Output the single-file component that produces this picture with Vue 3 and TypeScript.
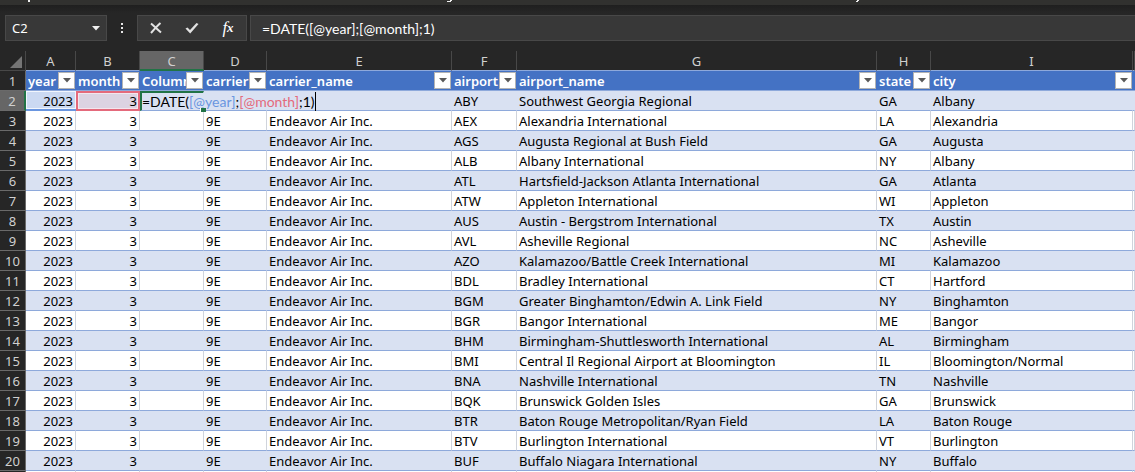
<script setup lang="ts">
import { ref } from 'vue'

interface Column {
  letter: string
  label: string
  cls: string
}

const columns: Column[] = [
  { letter: 'A', label: 'year', cls: 'w-a' },
  { letter: 'B', label: 'month', cls: 'w-b' },
  { letter: 'C', label: 'Column1', cls: 'w-c' },
  { letter: 'D', label: 'carrier', cls: 'w-d' },
  { letter: 'E', label: 'carrier_name', cls: 'w-e' },
  { letter: 'F', label: 'airport', cls: 'w-f' },
  { letter: 'G', label: 'airport_name', cls: 'w-g' },
  { letter: 'H', label: 'state', cls: 'w-h' },
  { letter: 'I', label: 'city', cls: 'w-i' },
]

const rows: string[][] = [
  ['ABY', 'Southwest Georgia Regional', 'GA', 'Albany'],
  ['AEX', 'Alexandria International', 'LA', 'Alexandria'],
  ['AGS', 'Augusta Regional at Bush Field', 'GA', 'Augusta'],
  ['ALB', 'Albany International', 'NY', 'Albany'],
  ['ATL', 'Hartsfield-Jackson Atlanta International', 'GA', 'Atlanta'],
  ['ATW', 'Appleton International', 'WI', 'Appleton'],
  ['AUS', 'Austin - Bergstrom International', 'TX', 'Austin'],
  ['AVL', 'Asheville Regional', 'NC', 'Asheville'],
  ['AZO', 'Kalamazoo/Battle Creek International', 'MI', 'Kalamazoo'],
  ['BDL', 'Bradley International', 'CT', 'Hartford'],
  ['BGM', 'Greater Binghamton/Edwin A. Link Field', 'NY', 'Binghamton'],
  ['BGR', 'Bangor International', 'ME', 'Bangor'],
  ['BHM', 'Birmingham-Shuttlesworth International', 'AL', 'Birmingham'],
  ['BMI', 'Central Il Regional Airport at Bloomington', 'IL', 'Bloomington/Normal'],
  ['BNA', 'Nashville International', 'TN', 'Nashville'],
  ['BQK', 'Brunswick Golden Isles', 'GA', 'Brunswick'],
  ['BTR', 'Baton Rouge Metropolitan/Ryan Field', 'LA', 'Baton Rouge'],
  ['BTV', 'Burlington International', 'VT', 'Burlington'],
  ['BUF', 'Buffalo Niagara International', 'NY', 'Buffalo'],
]

const formula = ref('=DATE([@year];[@month];1)')
const cellName = ref('C2')
</script>

<template>
  <div class="app">
    <div class="ribbon">
      <svg width="100%" height="5" aria-hidden="true">
        <path d="M28 0h2v2h-2zM447 1h4v1h-4zM450 0h2v1h-2zM856 1h2v1h-2zM857 0h2v1h-2z" fill="#f0f0f0" />
      </svg>
    </div>

    <div class="formula-bar">
      <div class="name-box">
        <input v-model="cellName" aria-label="Name box" />
        <button type="button" aria-label="Show names">
          <svg width="8" height="5" viewBox="0 0 8 5"><path d="M0 0h8L4 4.6z" fill="#f0f0f0" /></svg>
        </button>
      </div>
      <svg class="grip" width="4" height="12" viewBox="0 0 4 12">
        <path d="M1 1h2v2H1zM1 5h2v2H1zM1 9h2v2H1z" fill="#e6e6e6" />
      </svg>
      <div class="actions">
        <button type="button" aria-label="Cancel">
          <svg width="14" height="14" viewBox="0 0 14 14"><path d="M2 2.5C5 5 8.500 8.500 12 11.500M11.500 2C8 5 5 8.500 2 12" fill="none" stroke="#e2e2e2" stroke-width="2" /></svg>
        </button>
        <button type="button" aria-label="Enter">
          <svg width="14" height="14" viewBox="0 0 14 14"><path d="M.5 7.500L2.500 6.500L5 9L11.500 2L13.500 3L5.200 12.500z" fill="#e2e2e2" /></svg>
        </button>
        <button type="button" aria-label="Insert function" class="fx"><i>f</i><i class="x">x</i></button>
      </div>
      <input v-model="formula" class="formula" aria-label="Formula" />
    </div>

    <table class="sheet">
      <colgroup>
        <col class="w-n" />
        <col v-for="c in columns" :key="c.letter" :class="c.cls" />
        <col />
      </colgroup>
      <thead>
        <tr class="letters">
          <th class="corner"><svg width="12" height="12" viewBox="0 0 12 12"><path d="M12 0v12H0z" fill="#757575" /></svg></th>
          <th v-for="c in columns" :key="c.letter" :class="{ active: c.letter === 'C' }">{{ c.letter }}</th>
          <th></th>
        </tr>
        <tr class="names">
          <th class="num">1</th>
          <th v-for="c in columns" :key="c.letter" class="name">
            <div class="head">
              <span>{{ c.label }}</span>
              <button type="button" :aria-label="`Filter ${c.label}`">
                <svg width="8" height="5" viewBox="0 0 8 5"><path d="M0 0h8L4 4.500z" fill="#595959" /></svg>
              </button>
            </div>
          </th>
          <th class="name"></th>
        </tr>
      </thead>
      <tbody>
        <tr v-for="(r, i) in rows" :key="r[0]" :class="{ band: i % 2 === 0 }">
          <th class="num" :class="{ active: i === 0 }">{{ i + 2 }}</th>
          <td class="right" :class="{ 'ref-year': i === 0 }">2023</td>
          <td class="right" :class="{ 'ref-month': i === 0 }">3</td>
          <td :class="{ editing: i === 0 }">
            <div v-if="i === 0" class="editor">=DATE(<span class="blue">[@year]</span>;<span class="red">[@month]</span>;1)</div>
          </td>
          <td>{{ i === 0 ? '' : '9E' }}</td>
          <td>{{ i === 0 ? '' : 'Endeavor Air Inc.' }}</td>
          <td v-for="v in r" :key="v">{{ v }}</td>
          <td></td>
        </tr>
        <tr>
          <th class="num"></th>
          <td v-for="n in 10" :key="n"></td>
        </tr>
      </tbody>
    </table>
  </div>
</template>

<style>
body {
  margin: 0;
  background: #262626;
}
</style>

<style scoped>
.app {
  height: 100vh;
  overflow: hidden;
  background: #262626;
  color: #fff;
  font: 13px/19px "Noto Sans", sans-serif;
}
.app * {
  box-sizing: border-box;
}
button, input {
  border: 0;
  padding: 0;
  background: none;
  color: inherit;
  font: inherit;
}
input {
  outline: 0;
  min-width: 0;
}
svg {
  display: block;
}
.ribbon {
  height: 5px;
  background: #31312f;
}
.formula-bar {
  display: flex;
  align-items: center;
  height: 46px;
  padding: 0 0 0 5px;
  background: linear-gradient(#1f1f1f, #262626 8px);
}
.name-box, .actions, .formula {
  height: 26px;
  background: #383838;
  border: 1px solid #484848;
}
.name-box {
  display: flex;
  width: 102px;
  padding: 0 6px;
}
.name-box input {
  flex: 1;
}
.grip {
  margin: 0 13px;
}
.actions {
  display: flex;
  align-items: center;
  width: 110px;
}
.actions button {
  flex: 1;
  display: flex;
  justify-content: center;
}
.formula {
  flex: 1;
  margin-left: 3px;
  padding: 0 11px;
  border-right: 0;
}
.formula, .editor {
  font: 14px/19px Lato, "Noto Sans", sans-serif;
}
.actions .fx {
  font: 17px/18px "Liberation Serif", serif;
}
.fx .x {
  font-size: 13px;
  font-weight: 700;
}
.sheet {
  width: 100%;
  table-layout: fixed;
  border-collapse: separate;
  border-spacing: 0;
}
.w-n { width: 26px; }
.w-a { width: 50px; }
.w-b, .w-c { width: 64px; }
.w-d { width: 63px; }
.w-e { width: 185px; }
.w-f { width: 65px; }
.w-g { width: 360px; }
.w-h { width: 54px; }
.w-i { width: 202px; }
th, td {
  height: 20px;
  padding: 2px 2px 0;
  white-space: nowrap;
  font-weight: 400;
  line-height: 17px;
  vertical-align: top;
}
.letters th {
  padding: 2px 0 0;
  color: #d0d0d0;
  text-align: center;
  border-right: 1px solid #484848;
  border-bottom: 1px solid #8ea9db;
}
.letters .active {
  background: #666;
  border-bottom: 2px solid #217346;
  line-height: 16px;
}
.letters .corner {
  border-bottom-color: #484848;
}
.letters .corner svg {
  margin: 3px 3px 0 auto;
}
.num {
  padding: 2px 0 0;
  background: #262626;
  color: #d0d0d0;
  text-align: center;
  border-right: 1px solid #6a6a6a;
  border-bottom: 1px solid #6a6a6a;
}
.num.active {
  background: #666;
  border-right: 2px solid #217346;
}
.names .name {
  padding: 0 2px;
  background: #4472c4;
  border-bottom: 1px solid #8ea9db;
  text-align: left;
}
.head {
  display: flex;
  height: 19px;
  font-weight: 600;
}
.head span {
  flex: 1;
  min-width: 0;
  padding-top: 2px;
  overflow: hidden;
}
.head button {
  flex: none;
  display: flex;
  align-items: center;
  justify-content: center;
  width: 17px;
  height: 17px;
  margin: 1px -1px 0 0;
  background: #fff;
  border: 1px solid #b4b4b4;
}
td {
  background: #fff;
  color: #000;
  border-right: 1px solid #d0d4dc;
  border-bottom: 1px solid #8ea9db;
}
.band td {
  background: #d9e1f2;
  border-right-color: #d9e1f2;
}
.right {
  text-align: right;
}
.band .ref-year {
  background: #cbd9f2;
  border-bottom: 2px solid #6a96e0;
  border-right: 0;
  padding: 2px 3px 0 0;
  line-height: 16px;
  box-shadow: inset 0 0 0 1px #f2f6fd;
}
.band .ref-month {
  background: #dcd3e2;
  border: 2px solid #e46a7c;
  padding: 0 1px 0 0;
  line-height: 16px;
  box-shadow: inset 0 0 0 1px #f3e6ee;
}
.band .editing {
  position: relative;
  border-top: 2px solid #217346;
  border-left: 2px solid #217346;
}
.editing::after {
  content: "";
  position: absolute;
  right: -3px;
  bottom: -2px;
  width: 5px;
  height: 4px;
  background: #217346;
  border-left: 1px solid #fff;
}
.editor {
  position: absolute;
  top: -1px;
  left: 0;
  border-right: 1px solid #000;
}
.blue { color: #6a96e0; }
.red { color: #e46a7c; }
</style>
